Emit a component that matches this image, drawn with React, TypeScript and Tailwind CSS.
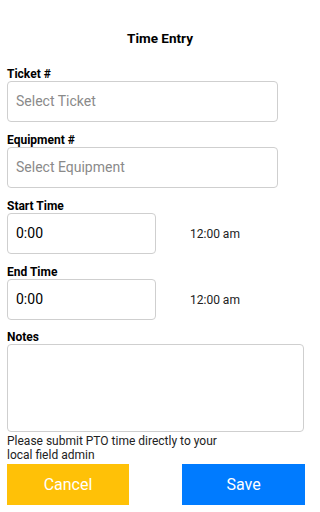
function Label({ children }: { children: string }) {
  return <div className="h-[12px] text-[12px] leading-[12px] font-bold text-black">{children}</div>;
}

function TimeField({ label, value, display }: { label: string; value: string; display: string }) {
  return (
    <div className="mt-[12px]">
      <Label>{label}</Label>
      <div className="mt-[1px] flex items-center">
        <div className="flex h-[41px] w-[149px] items-center rounded-[4px] border border-[#cfcfcf] px-[8px] text-[14px] text-black">
          {value}
        </div>
        <span className="ml-[34px] text-[12px] text-[#222]">{display}</span>
      </div>
    </div>
  );
}

export default function App() {
  return (
    <div className="min-h-[512px] bg-white px-[7px] font-['Roboto',sans-serif]">
      <div className="pt-[30px] h-[46px] text-center text-[13.5px] leading-[16px] font-bold text-black">Time Entry</div>

      <div className="mt-[22px]">
        <Label>Ticket #</Label>
        <div className="mt-[1px] flex h-[41px] w-[271px] items-center rounded-[4px] border border-[#cfcfcf] px-[8px] text-[14px] text-[#8a8a8a]">
          Select Ticket
        </div>
      </div>

      <div className="mt-[12px]">
        <Label>Equipment #</Label>
        <div className="mt-[1px] flex h-[41px] w-[271px] items-center rounded-[4px] border border-[#cfcfcf] px-[8px] text-[14px] text-[#8a8a8a]">
          Select Equipment
        </div>
      </div>

      <TimeField label="Start Time" value="0:00" display="12:00 am" />
      <TimeField label="End Time" value="0:00" display="12:00 am" />

      <div className="mt-[11px]">
        <Label>Notes</Label>
        <textarea className="mt-[1px] block h-[88px] w-[297px] resize-none rounded-[4px] border border-[#cfcfcf] p-[8px] text-[14px] outline-none" />
      </div>

      <p className="mt-[2px] w-[230px] text-[12px] leading-[14px] text-[#222]">
        Please submit PTO time directly to your local field admin
      </p>

      <div className="mt-[2px] flex w-[298px] justify-between">
        <button className="h-[41px] w-[122px] bg-[#ffc107] text-[16px] text-white">Cancel</button>
        <button className="h-[41px] w-[123px] bg-[#007bff] text-[16px] text-white">Save</button>
      </div>
    </div>
  );
}
